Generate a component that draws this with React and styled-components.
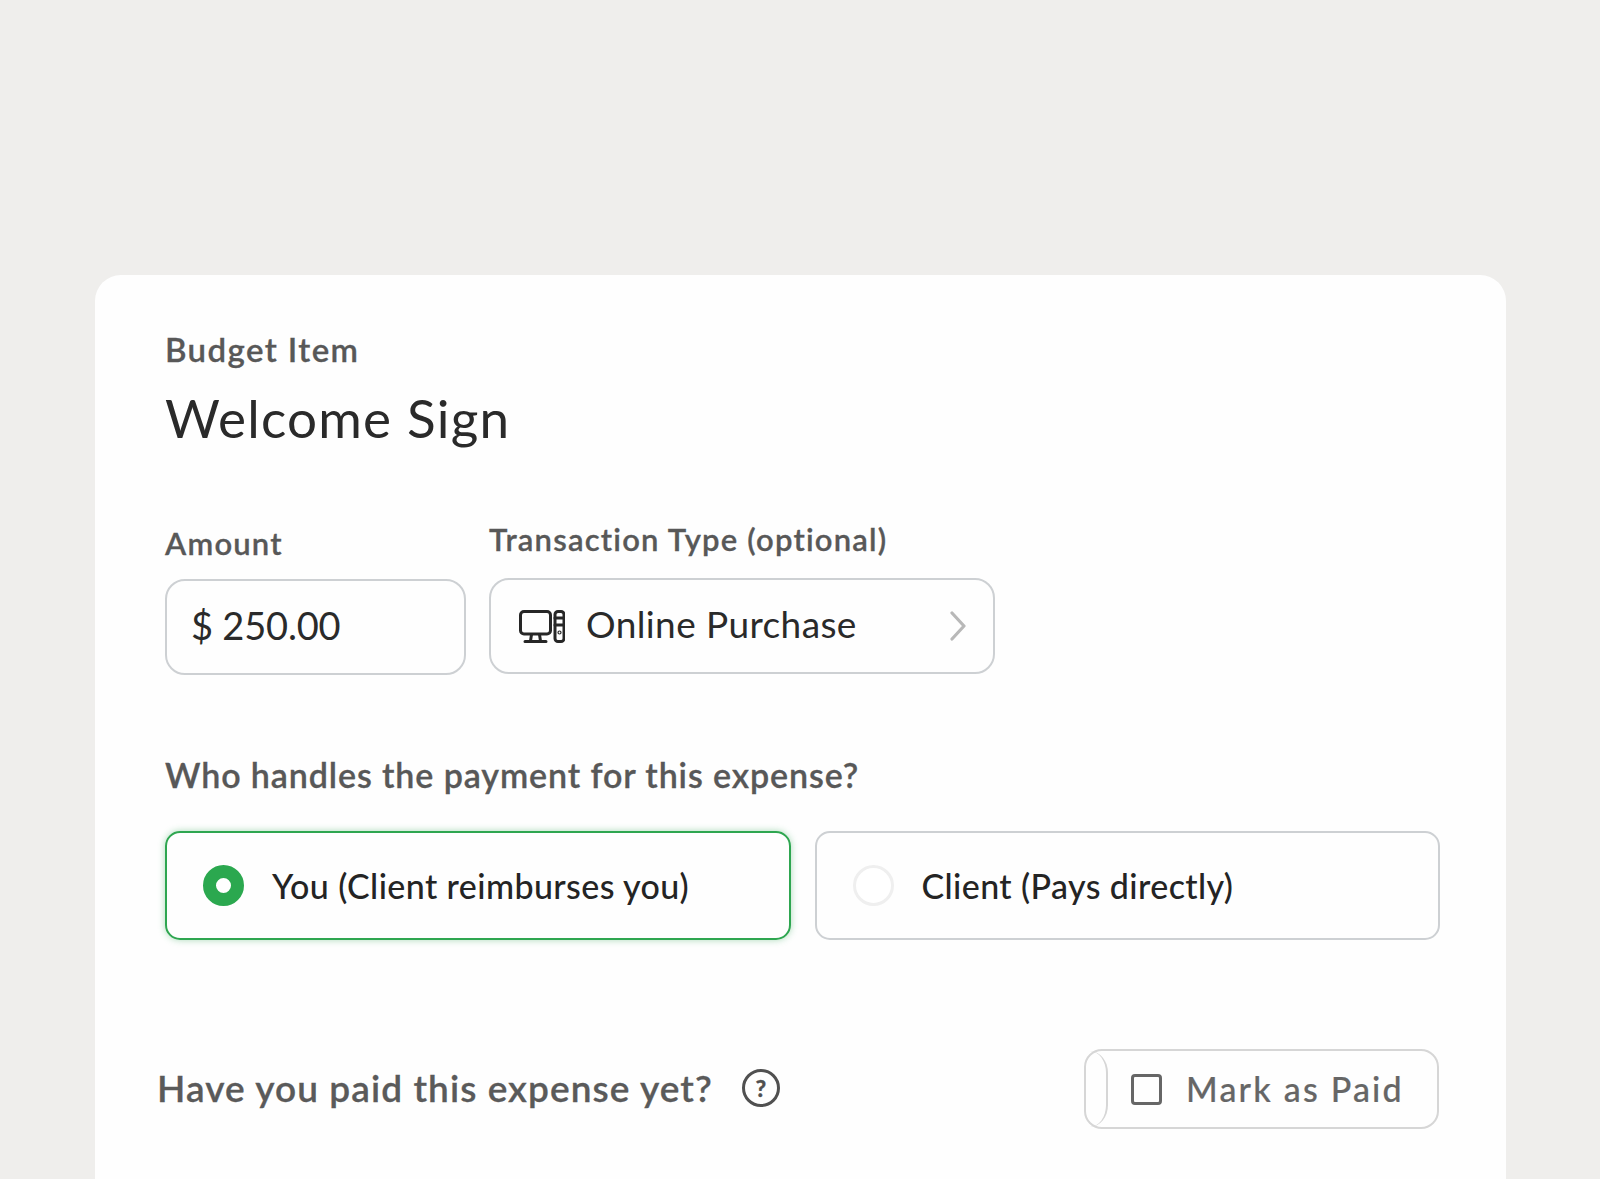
import styled, { createGlobalStyle } from 'styled-components';

const GlobalStyle = createGlobalStyle`
  html, body {
    margin: 0;
    height: 1179px;
    overflow: hidden;
    background: #efeeec;
  }
`;

const DesktopIcon = () => (
  <svg width="46" height="33" viewBox="0 0 46 33" fill="none" stroke="#262626" strokeWidth="3" strokeLinecap="round" strokeLinejoin="round">
    <rect x="1.500" y="1.500" width="30" height="22.500" rx="3.500" />
    <path d="M12.500 24.500 11.500 31M20.500 24.500l1 6.500M6 31.500h21" />
    <rect x="36" y="1.500" width="9" height="30" rx="3" />
    <path d="M36 8h9M36 15h9" />
    <circle cx="40.500" cy="22.500" r="0.600" />
  </svg>
);

const Chevron = () => (
  <svg width="16" height="30" viewBox="0 0 16 30" fill="none" stroke="#b8b8b8" strokeWidth="3.200" strokeLinecap="round" strokeLinejoin="round">
    <path d="M2 2l12 13L2 28" />
  </svg>
);

const App = () => {
  return (
    <>
      <GlobalStyle />
      <Page>
        <Card>
          <Eyebrow>Budget Item</Eyebrow>
          <Title>Welcome Sign</Title>

          <FieldRow>
            <AmountField>
              <FieldLabel spacing={1.2} gap={17}>Amount</FieldLabel>
              <AmountBox>$ 250.00</AmountBox>
            </AmountField>
            <TypeField>
              <FieldLabel spacing={1.2} gap={20}>Transaction Type (optional)</FieldLabel>
              <TypeBox>
                <DesktopIcon />
                <TypeName>Online Purchase</TypeName>
                <Chevron />
              </TypeBox>
            </TypeField>
          </FieldRow>

          <Question>Who handles the payment for this expense?</Question>
          <Choices>
            <Choice selected>
              <Radio selected />
              <ChoiceText>You (Client reimburses you)</ChoiceText>
            </Choice>
            <Choice>
              <Radio />
              <ChoiceText>Client (Pays directly)</ChoiceText>
            </Choice>
          </Choices>

          <PaidRow>
            <PaidQuestion>
              Have you paid this expense yet?
              <HelpIcon>?</HelpIcon>
            </PaidQuestion>
            <PaidButton>
              <ButtonCap />
              <CheckBox />
              <PaidText>Mark as Paid</PaidText>
            </PaidButton>
          </PaidRow>
        </Card>
      </Page>
    </>
  );
};

export default App;

const Page = styled.div`
  height: 1179px;
  padding: 275px 94px 0 95px;
  box-sizing: border-box;
  overflow: hidden;
  font-family: Lato, 'Noto Sans', sans-serif;
`;

const Card = styled.section`
  height: 960px;
  padding: 54px 67px 0 70px;
  border-radius: 26px;
  background: #fefefe;
`;

const Eyebrow = styled.div`
  color: #585858;
  font-size: 33px;
  font-weight: 600;
  line-height: 40px;
  letter-spacing: 1.4px;
  -webkit-text-stroke: 0.3px #585858;
`;

const Title = styled.h1`
  margin: 17px 0 0;
  color: #2a2a2a;
  font-size: 53px;
  font-weight: 400;
  line-height: 64px;
  letter-spacing: 1.2px;
`;

const FieldRow = styled.div`
  display: flex;
  align-items: flex-end;
  gap: 23px;
  margin-top: 70px;
`;

const AmountField = styled.div`
  width: 301px;
  margin-bottom: -1px;
`;

const TypeField = styled.div`
  width: 506px;
`;

const FieldLabel = styled.div`
  margin-bottom: ${({ gap }) => gap}px;
  color: #585858;
  font-size: 31px;
  font-weight: 600;
  line-height: 38px;
  letter-spacing: ${({ spacing }) => spacing}px;
  -webkit-text-stroke: 0.3px #585858;
`;

const AmountBox = styled.div`
  display: flex;
  align-items: center;
  height: 96px;
  padding: 0 0 5px 24px;
  box-sizing: border-box;
  border: 2px solid #cdd0d3;
  border-radius: 20px;
  color: #2a2a2a;
  font-size: 38px;
  letter-spacing: -0.2px;
`;

const TypeBox = styled.div`
  display: flex;
  align-items: center;
  height: 96px;
  padding: 0 27px 0 28px;
  box-sizing: border-box;
  border: 2px solid #cdd0d3;
  border-radius: 20px;
`;

const TypeName = styled.span`
  flex: 1;
  margin: 0 0 5px 21px;
  color: #2a2a2a;
  font-size: 37px;
  letter-spacing: 0.4px;
`;

const Question = styled.div`
  margin-top: 80px;
  color: #585858;
  font-size: 34px;
  font-weight: 600;
  line-height: 42px;
  letter-spacing: 0.9px;
  -webkit-text-stroke: 0.3px #585858;
`;

const Choices = styled.div`
  display: grid;
  grid-template-columns: 1fr 1fr;
  gap: 24px;
  margin: 35px -1px 0 0;
`;

const Choice = styled.div`
  display: flex;
  align-items: center;
  height: 109px;
  padding-left: 36px;
  box-sizing: border-box;
  border: 2px solid ${({ selected }) => (selected ? '#2ea650' : '#cdd0d3')};
  border-radius: 15px;
  box-shadow: ${({ selected }) => (selected ? '0 0 7px rgba(46, 166, 80, 0.4)' : 'none')};
`;

const Radio = styled.span`
  flex-shrink: 0;
  width: 41px;
  height: 41px;
  box-sizing: border-box;
  border-radius: 50%;
  border: ${({ selected }) => (selected ? '13px solid #2ba84f' : '3px solid #efefef')};
  background: #fff;
`;

const ChoiceText = styled.span`
  margin-left: 28px;
  color: #242424;
  font-size: 34px;
  font-weight: 500;
  letter-spacing: 0.4px;
`;

const PaidRow = styled.div`
  display: flex;
  align-items: center;
  justify-content: space-between;
  margin: 109px 0 0 -8px;
`;

const PaidQuestion = styled.div`
  display: flex;
  align-items: center;
  gap: 29px;
  margin-bottom: 3px;
  color: #5a5a5a;
  font-size: 37px;
  font-weight: 600;
  letter-spacing: 1.08px;
  -webkit-text-stroke: 0.3px #5a5a5a;
`;

const HelpIcon = styled.span`
  display: flex;
  align-items: center;
  justify-content: center;
  width: 38px;
  height: 38px;
  box-sizing: border-box;
  border: 3.500px solid #505050;
  border-radius: 50%;
  color: #505050;
  font-size: 23px;
  font-weight: 900;
  letter-spacing: 0;
`;

const PaidButton = styled.div`
  display: flex;
  align-items: center;
  width: 355px;
  height: 80px;
  box-sizing: border-box;
  border: 2px solid #d6d6d6;
  border-radius: 18px;
`;

const ButtonCap = styled.span`
  align-self: stretch;
  width: 22px;
  box-sizing: border-box;
  border-right: 2px solid #d6d6d6;
  border-radius: 0 18px 18px 0 / 0 22px 22px 0;
`;

const CheckBox = styled.span`
  width: 31px;
  height: 31px;
  margin-left: 23px;
  box-sizing: border-box;
  border: 3px solid #666;
  border-radius: 4px;
`;

const PaidText = styled.span`
  margin: 0 0 2px 24px;
  color: #666;
  font-size: 34px;
  font-weight: 500;
  letter-spacing: 2.200px;
  -webkit-text-stroke: 0.2px #666;
`;
